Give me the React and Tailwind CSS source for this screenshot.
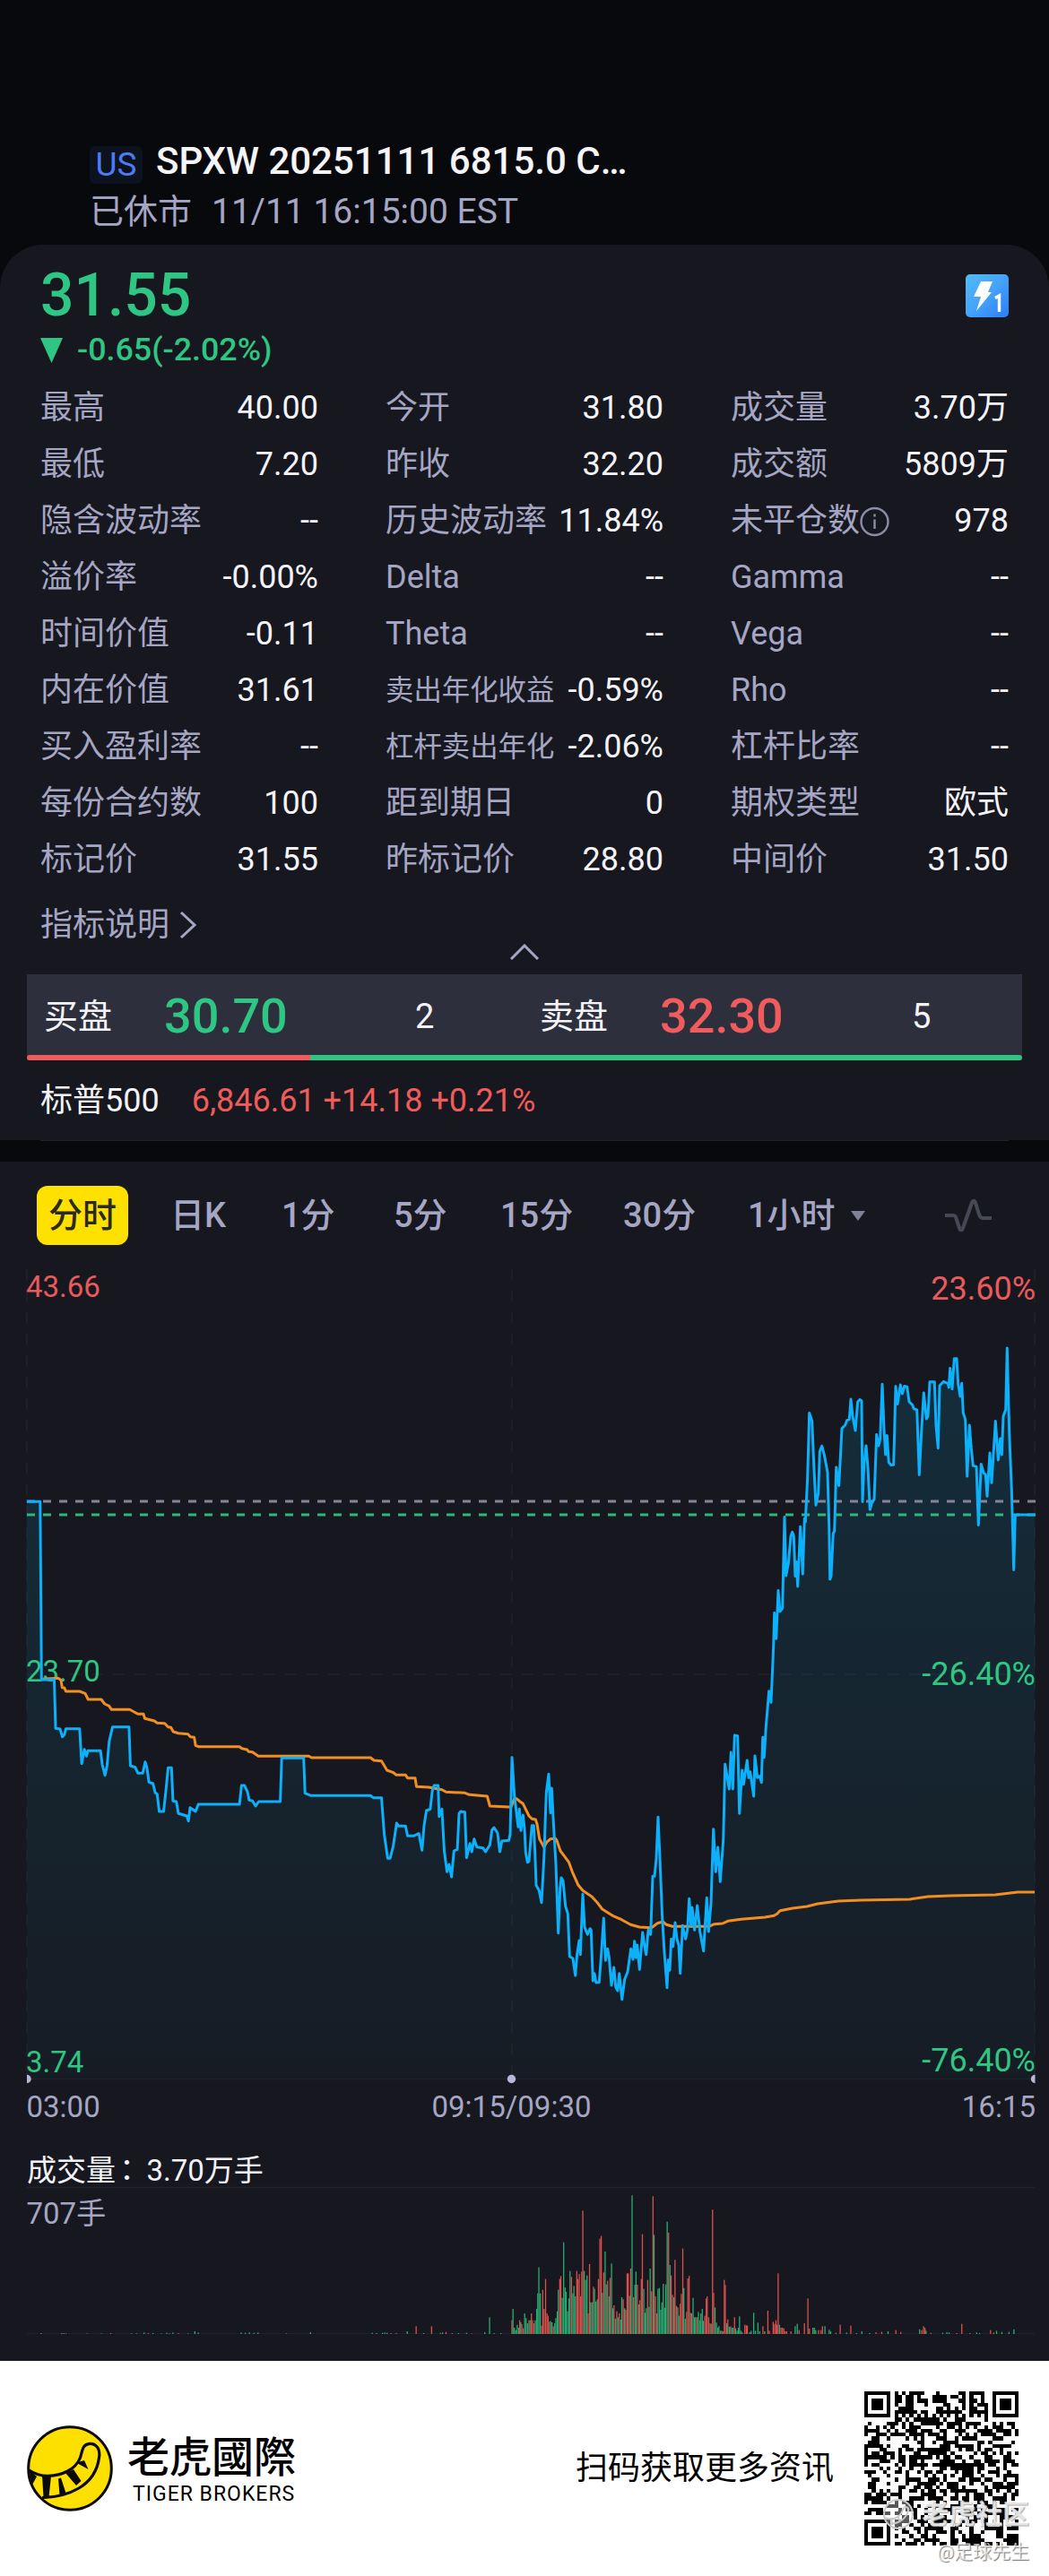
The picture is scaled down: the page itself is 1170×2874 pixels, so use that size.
import React from "react";

const STATS = [
  ["最高", "40.00", "今开", "31.80", "成交量", "3.70万"],
  ["最低", "7.20", "昨收", "32.20", "成交额", "5809万"],
  ["隐含波动率", "--", "历史波动率", "11.84%", "未平仓数", "978"],
  ["溢价率", "-0.00%", "Delta", "--", "Gamma", "--"],
  ["时间价值", "-0.11", "Theta", "--", "Vega", "--"],
  ["内在价值", "31.61", "卖出年化收益", "-0.59%", "Rho", "--"],
  ["买入盈利率", "--", "杠杆卖出年化", "-2.06%", "杠杆比率", "--"],
  ["每份合约数", "100", "距到期日", "0", "期权类型", "欧式"],
  ["标记价", "31.55", "昨标记价", "28.80", "中间价", "31.50"],
];

// Converts "x,y x,y" samples of one session segment to chart pixels.
const project = (text, ox, oy, sx, sy) =>
  text
    .trim()
    .split(/\s+/)
    .map((p) => {
      const [x, y] = p.split(",").map(Number);
      return (ox + x / sx).toFixed(1) + "," + (oy + y / sy).toFixed(1);
    })
    .join(" ");

const PRE = [0, 1640, 2.6133, 3];
const MID = [540, 1840, 3, 3];
const END = [820, 1480, 3, 2.8];

const PRICE = [
  project(
    "78,106 117,106 121,702 158,702 162,865 175,867 182,893 188,885 192,866 232,866 238,983 246,935 252,958 256,940 293,940 298,985 306,1022 312,990 318,910 328,860 376,860 380,990 394,995 402,1015 416,1015 423,977 428,995 434,1045 446,1050 452,1080 458,1085 464,1143 477,1143 483,1080 490,997 500,997 504,1108 514,1110 520,1150 545,1158 549,1175 554,1130 570,1143 578,1119 698,1119 704,1056 713,1056 722,1080 726,1105 736,1108 745,1125 754,1110 817,1110 821,964 885,964 889,1082 907,1090 1080,1090 1088,1097 1112,1097 1120,1220 1130,1300 1137,1300 1146,1260 1156,1182 1162,1192 1182,1192 1188,1225 1205,1225 1221,1217 1230,1273 1236,1190 1243,1140 1254,1135 1260,1075 1265,1056 1277,1056 1280,1160 1288,1135 1295,1275 1303,1345 1309,1320 1316,1362 1323,1275 1333,1270 1338,1150 1343,1143 1355,1145 1360,1298 1370,1250 1375,1278 1382,1235 1390,1262 1408,1265 1415,1278 1428,1255 1434,1205 1440,1197 1450,1215 1457,1278 1463,1242 1483,1240 1487,1220",
    ...PRE
  ),
  project(
    "93,362 101,490 114,595 118,535 123,607 130,555 135,600 139,680 145,713 150,710 154,660 160,590 166,590 170,680 174,790 184,808 192,848 200,700 208,480 216,418 222,548 226,465 232,580 240,720 248,950 254,800 258,765 264,775 272,860 280,885 286,1028 297,1035 305,1092 311,1020 318,975 322,1022 330,820 336,930 346,955 354,935 358,940 364,1110 369,1085 374,1115 385,1115 392,1020 400,900 406,1042 413,1003 418,1030 426,1125 434,1065 440,1130 447,1143 452,1085 461,1172 470,1105 480,1080 491,1003 498,1038 503,977 508,1032 512,990 520,1072 530,948 536,990 542,1022 549,940 557,955 564,760 570,760 576,700 582,562 588,700 596,900 603,1015 612,1133 616,1040 621,1075 626,970 632,995 639,915 645,970 651,990 656,1085 664,925 674,970 680,940 686,835 692,925 696,865 704,940 713,858 722,945 734,1010 745,832 751,945 759,850 767,602 775,745 782,663 790,778 800,640 806,385 820,468 826,345 832,468 838,288 848,290 854,550 863,405 868,452 880,372 885,430 890,410 902,492 906,357 914,430 922,425 928,446 932,295 937,362 943,260 953,140 960,178",
    ...MID
  ),
  project(
    "128,1000 131,895 137,975 144,825 150,890 158,880 165,595 170,778 178,740 186,655 191,642 196,655 201,780 205,735 209,812 218,625 226,773 232,600 235,610 242,470 248,270 257,295 263,430 270,558 278,520 283,390 290,373 298,400 309,455 314,620 317,790 321,780 328,645 332,640 338,440 347,497 357,318 368,308 374,293 382,290 387,227 393,280 402,325 410,235 417,228 423,232 426,547 431,430 438,372 444,440 451,572 458,548 465,540 473,337 480,372 485,350 492,180 498,320 503,400 508,340 514,425 522,433 530,432 537,187 543,242 553,182 559,210 566,186 575,188 582,235 593,245 598,257 608,260 616,463 623,330 631,207 640,288 645,280 651,173 667,173 672,310 679,380 684,185 697,172 712,178 715,190 719,130 726,195 733,100 741,100 746,180 753,218 758,177 763,270 770,290 776,468 784,308 790,380 796,435 807,437 814,620 823,430 832,458 838,462 843,530 852,395 858,488 871,295 880,417 887,350 892,400 897,280 905,260 910,67 917,330 925,510 932,760 937,590 945,588 1003,588",
    ...END
  ),
].join(" ");

const AVERAGE = [
  project(
    "122,700 170,697 178,704 181,728 188,730 192,741 232,741 248,748 257,768 295,768 305,783 318,790 325,802 378,802 402,817 418,817 422,832 450,840 458,847 480,848 490,860 498,862 505,876 520,881 548,884 555,893 566,895 570,922 578,926 698,926 705,932 720,936 725,943 736,944 753,958 900,958 908,963 1080,963 1090,972 1112,974 1120,990 1128,1005 1145,1012 1155,1021 1182,1021 1188,1031 1210,1031 1214,1060 1250,1062 1288,1070 1300,1078 1355,1081 1368,1087 1420,1092 1428,1125 1483,1128",
    ...PRE
  ),
  project(
    "90,528 101,500 108,500 120,510 130,517 150,558 160,568 172,570 177,585 185,635 200,662 210,645 222,635 238,633 243,640 255,675 270,695 283,712 295,745 315,790 330,808 360,828 380,850 395,870 430,892 460,905 490,922 520,930 560,932 580,917 598,912 610,922 630,928 752,928 770,920 798,918 815,910 860,904 940,897 970,892 980,886 990,875",
    ...MID
  ),
  "884,2129 900,2127 912,2124 935,2121 960,2120 1015,2119 1035,2116 1060,2115 1110,2114 1135,2111 1154,2111",
].join(" ");

const bars = (text, ox, sx) =>
  text
    .trim()
    .split(/\s+/)
    .map((p) => {
      const [x, rest] = p.split(",");
      return { x: ox + Number(x) / sx, h: (1031 - parseInt(rest, 10)) / 3, up: rest.endsWith("r") };
    });

const VOLUME = [
  ...bars(
    "120,1028g 180,1028g 186,1028r 192,1029g 254,1029r 296,1029g 323,1028r 383,1029g 398,1029g 420,1026g 432,1028r 446,1028g 470,1029g 486,1027g 494,1029g 504,1026g 520,1028r 548,1029g 568,1022g 578,1026g 703,1026g 715,1027g 727,1026g 740,1027g 752,1026g 835,1029r 905,1025g 1085,1027g 1098,1028g 1115,1027g 1122,1026g 1128,1027g 1140,1028r 1155,1028r 1187,1022g 1213,1005r 1235,1028g 1258,1005r 1284,1027g 1290,1026g 1300,1024r 1318,1028r 1336,1028g 1360,1027g 1375,1029r 1413,1025g 1427,975g 1440,1028g 1460,1028g",
    0,
    2.6133
  ),
  ...bars(
    "53,985r 56,947g 60,1010g 64,1018g 68,1000g 72,1010g 75,985r 78,992g 81,998r 85,1012r 89,962g 93,978g 97,995g 101,985r 104,985g 108,962r 111,985r 115,995r 119,985g 123,947g 126,895g 129,808g 133,895g 137,1003r 140,883r 144,947r 148,847r 152,962r 155,970r 159,990r 162,988g 166,992g 170,1005r 174,995g 177,978g 181,955g 184,883g 188,847r 191,837r 195,910g 199,724g 203,875g 206,890g 210,955g 214,912g 217,820g 221,840r 225,895g 228,870g 232,905g 236,820r 239,847r 243,830r 247,905r 250,822r 253,618r 257,820g 261,850g 265,835g 268,962r 272,797r 275,925g 279,925g 283,873r 286,880g 290,922g 294,915g 297,847r 301,712r 305,703r 308,893g 312,825r 316,755g 319,865g 323,853r 327,905g 330,843r 334,795g 338,945g 341,935r 345,980g 349,955r 352,975g 356,962r 360,983g 363,908g 367,915r 371,945g 374,950r 378,828r 381,828r 385,903g 388,812r 392,567g 396,908r 400,866g 403,822g 407,866r 411,932g 414,918r 418,847r 421,697r 425,880g 429,960g 432,945g 436,850r 440,940g 443,812g 447,888r 451,570r 454,699g 458,905r 462,962r 465,880g 469,877g 473,950g 476,925g 480,863g 484,943g 487,865g 491,655g 495,692r 499,800g 502,835r 506,900r 510,908g 513,783r 517,937r 521,942g 524,970g 528,930r 531,897r 535,745r 538,877g 542,980g 546,957r 549,845r 553,837r 557,960g 560,962r 564,910g 568,975g 571,975g 575,975r 579,957g 582,985g 586,962g 590,947g 593,987g 597,970r 601,912r 604,905r 608,975r 612,995r 615,997g 619,615r 622,893r 626,942g 630,993g 634,1010g 637,1005g 641,1020r 645,1020g 648,1022r 652,850r 655,867r 659,995g 662,982r 666,1007g 670,1005r 673,1010g 677,1010g 681,975r 684,1012g 688,1020g 692,1010g 695,972g 699,1020g 703,1025r 710,1000r 714,1002r 717,1003r 724,1025g 728,1020g 735,960g 740,1020g 747,993g 752,1022g 761,1005r 766,1022g 775,953r 779,1020r 790,990r 794,997r 798,985r 801,1000r 804,828r 808,1000g 812,1010r 816,1010r 820,1012r 824,1022r 828,1022r 840,1022r 852,1005g 858,997g 863,1018r 878,995r 888,912r 892,1013r 902,1010g 906,1010g 910,1018g 918,1018r 925,1018r 929,1005r 936,1005g 948,1017g 952,1022g 967,1027r 979,1000r 997,1026g 1009,1003r 1025,1028g 1040,1022g 1062,1028g 1080,1025r 1096,1024r 1114,1022g 1136,1018r 1150,1024r 1203,1015g 1209,1018r 1214,1005r 1218,1010r 1221,1020g 1235,1027r 1268,1027g 1280,1025g 1286,1026g 1308,1028r 1322,997r 1345,1028g 1364,1026g 1372,1028g 1403,1018r 1412,1026r 1420,1020g 1435,1024g 1455,1024g 1469,1015g",
    550,
    2.529
  ),
];

const TOP_ROW = [8, 10, 12, 13, 14, 15, 19, 25, 26, 28, 29, 30, 31];
const inFinder = (x, y) => (x < 8 && y < 8) || (x > 32 && y < 8) || (x < 8 && y > 32);

function isDark(x, y) {
  if (inFinder(x, y)) {
    const fx = x > 20 ? x - 34 : x;
    const fy = y > 20 ? y - 34 : y;
    if (fx < 0 || fy < 0 || fx > 6 || fy > 6) return false;
    return Math.max(Math.abs(fx - 3), Math.abs(fy - 3)) !== 2;
  }
  if (x === 6) return y % 2 === 0;
  if (y === 6) return x % 2 === 0;
  if (Math.abs(x - 34) <= 2 && Math.abs(y - 34) <= 2) {
    return Math.max(Math.abs(x - 34), Math.abs(y - 34)) !== 1;
  }
  if (y === 0) return TOP_ROW.includes(x);
  const v = Math.sin(x * 12.9898 + y * 78.233) * 43758.5453;
  return v - Math.floor(v) > 0.48;
}

function qrPath() {
  let d = "";
  for (let y = 0; y < 41; y++) {
    for (let x = 0; x < 41; x++) {
      if (isDark(x, y)) d += `M${x} ${y}h1v1h-1z`;
    }
  }
  return d;
}
const QR = qrPath();

function Cell({ label, value, info }) {
  const small = label.length === 6;
  return (
    <div className="flex h-[63px] items-center justify-between">
      <div className="flex items-center text-[#a5a6c4]">
        <span className={small ? "text-[31.4px] leading-[63px]" : "leading-[63px]"}>{label}</span>
        {info && (
          <svg className="h-9 w-9" viewBox="0 0 36 36" fill="none" stroke="#8b8ca6" strokeWidth="2.4">
            <circle cx="16.5" cy="18" r="15" />
            <path d="M16.5 15.5v10.5M16.5 9.5v3" />
          </svg>
        )}
      </div>
      <span className="leading-[63px] text-[#f3f3f7]">{value}</span>
    </div>
  );
}

function Header() {
  return (
    <header className="h-[273px] pl-[100px] pt-[155px]">
      <div className="flex h-[50px] items-center">
        <div className="mt-[7px] flex h-[42px] w-[59px] items-center justify-center rounded-md bg-[#0c121e] text-[37px] leading-[42px] text-[#4b7cf3]">
          US
        </div>
        <h1 className="ml-[15px] text-[42px] font-medium leading-[50px] text-[#f5f5f7]">SPXW 20251111 6815.0 C…</h1>
      </div>
      <div className="mt-[6px] flex h-[50px] items-center text-[39px] leading-[50px] text-[#a5a6c4]">
        <span className="w-[136px] text-[38px]">已休市</span>
        <span>11/11 16:15:00 EST</span>
      </div>
    </header>
  );
}

function Quote() {
  return (
    <section className="h-[999px] rounded-t-[48px] bg-[#17181f] pt-[20px]">
      <div className="pl-[45px] pr-[45px]">
        <div className="flex h-[73px] items-center justify-between">
          <span className="text-[66px] font-medium leading-[73px] text-[#2fc683]">31.55</span>
          <svg className="h-12 w-12" viewBox="0 0 48 48">
            <defs>
              <linearGradient id="flash" x1="0" y1="0" x2="1" y2="1">
                <stop offset="0" stopColor="#52bcf6" />
                <stop offset="0.5" stopColor="#45a2fa" />
                <stop offset="1" stopColor="#2b7df6" />
              </linearGradient>
            </defs>
            <rect width="48" height="48" rx="5" fill="url(#flash)" />
            <path d="M17 8h13l-5 12h4L12 41l5-16H9z" fill="#fff" />
            <path d="M33 26.500l4.500-2.500V42" fill="none" stroke="#fff" strokeWidth="3.400" />
          </svg>
        </div>
        <div className="flex h-[49px] items-center text-[35.8px] font-medium leading-[49px] text-[#2fc683]">
          <svg className="mr-4 h-7 w-[25px]" viewBox="0 0 25 28">
            <path d="M0 0h25L12.500 28z" fill="#2fc683" />
          </svg>
          -0.65(-2.02%)
        </div>
        <div className="mt-[9px] grid grid-cols-3 gap-x-[75px] text-[36px]">
          {STATS.flatMap((r) => [
            <Cell key={r[0]} label={r[0]} value={r[1]} />,
            <Cell key={r[2]} label={r[2]} value={r[3]} />,
            <Cell key={r[4]} label={r[4]} value={r[5]} info={r[4] === "未平仓数"} />,
          ])}
        </div>
        <div className="mt-[10px] flex h-[62px] items-center text-[36px] leading-[62px] text-[#a5a6c4]">
          指标说明
          <svg className="ml-[11px] h-8 w-5" viewBox="0 0 20 32" fill="none" stroke="#a5a6c4" strokeWidth="3">
            <path d="M2 2l15 14L2 30" />
          </svg>
        </div>
      </div>
      <div className="-mt-[10px] flex h-[34px] justify-center">
        <svg className="h-[18px] w-8" viewBox="0 0 32 18" fill="none" stroke="#a5a6c4" strokeWidth="3">
          <path d="M1 17L16 2l15 15" />
        </svg>
      </div>
      <div className="mx-[30px] h-24 bg-[#2d2f3d]">
        <div className="flex h-[90px] text-[38px] leading-[94px] text-[#f3f3f7]">
          <div className="flex w-[553px] pl-[19px]">
            <span className="w-[134px]">买盘</span>
            <span className="w-[280px] text-[54px] font-medium text-[#2fc683]">30.70</span>
            <span>2</span>
          </div>
          <div className="flex pl-[19px]">
            <span className="w-[134px]">卖盘</span>
            <span className="w-[281px] text-[54px] font-medium text-[#f05b5b]">32.30</span>
            <span>5</span>
          </div>
        </div>
        <div className="flex h-[6px] overflow-hidden rounded-full">
          <div className="w-[316px] bg-[#f05b5b]" />
          <div className="flex-1 bg-[#2fc683]" />
        </div>
      </div>
      <div className="mx-[45px] flex h-[90px] items-center border-b border-[#1f2028] text-[36px] leading-[90px]">
        <span className="text-[#f3f3f7]">标普500</span>
        <span className="ml-9 text-[#f05b5b]">6,846.61 +14.18 +0.21%</span>
      </div>
    </section>
  );
}

function Tabs() {
  return (
    <nav className="flex h-[120px] items-center pl-[41px] text-[38px] font-medium leading-[66px] text-[#a5a6c4]">
      <div className="flex h-[66px] w-[102px] items-center justify-center rounded-xl bg-[#ffe100] text-[#2b2a1c]">分时</div>
      <span className="ml-[47px] w-[124px]">日K</span>
      <span className="w-[125px]">1分</span>
      <span className="w-[119px]">5分</span>
      <span className="w-[137px]">15分</span>
      <span className="w-[139px]">30分</span>
      <span>1小时</span>
      <svg className="ml-[17px] h-[11px] w-4" viewBox="0 0 16 11">
        <path d="M0 0h16L8 11z" fill="#7f809a" />
      </svg>
      <svg className="ml-[88px] h-10 w-[54px]" viewBox="0 0 54 40" fill="none" stroke="#474855" strokeWidth="4" strokeLinejoin="round">
        <path d="M1 20h9c3 0 3 2 4 5l3 9c1 3 3 3 4 0L31 6c1-3 3-3 4 0l4 13c1 3 2 4 5 4h9" />
      </svg>
    </nav>
  );
}

function Chart() {
  return (
    <svg className="block h-[1218px] w-full" viewBox="0 1416 1170 1218">
      <defs>
        <linearGradient id="area" gradientUnits="userSpaceOnUse" x1="0" y1="1500" x2="0" y2="2320">
          <stop offset="0" stopColor="#06a7dc" stopOpacity="0.15" />
          <stop offset="1" stopColor="#06a7dc" stopOpacity="0.03" />
        </linearGradient>
        <clipPath id="plot">
          <rect x="30" y="1416" width="1124.500" height="930" />
        </clipPath>
      </defs>
      <g stroke="#212229" strokeWidth="1.500" fill="none">
        <path d="M30 1416V2320M571 1416V2320M1154 1416V2320M30 1868H1154" strokeDasharray="13 11" />
        <path d="M30 2319.500H1154M30 2440.500H1154" />
      </g>
      <polygon points={`30,2319 ${PRICE} 1154.300,2319`} fill="url(#area)" />
      <g strokeWidth="3" strokeDasharray="9 9">
        <path d="M30 1675H1155" stroke="#85839a" />
        <path d="M30 1690H1155" stroke="#2fb67c" />
      </g>
      <g fontSize="33" fill="#2fc683">
        <text x="29" y="1447" fill="#e85a5c">43.66</text>
        <text x="29" y="1875.500">23.70</text>
        <text x="29" y="2311.500">3.74</text>
      </g>
      <g fill="none" strokeLinejoin="round">
        <polyline points={AVERAGE} stroke="#f28f22" strokeWidth="3" />
        <polyline points={PRICE} stroke="#0cb0fb" strokeWidth="3" />
      </g>
      <g fontSize="36" fill="#2fc683" textAnchor="end">
        <text x="1155" y="1450" fill="#e85a5c">23.60%</text>
        <text x="1155" y="1880">-26.40%</text>
        <text x="1155" y="2311">-76.40%</text>
      </g>
      <g fill="#b7b8d6" clipPath="url(#plot)">
        <circle cx="30" cy="2319.500" r="4.700" />
        <circle cx="570.500" cy="2319.500" r="4.700" />
        <circle cx="1154.500" cy="2319.500" r="4.700" />
      </g>
      <g fontSize="33" fill="#a5a6c4">
        <text x="29.500" y="2362">03:00</text>
        <text x="570.500" y="2362" textAnchor="middle">09:15/09:30</text>
        <text x="1155" y="2362" textAnchor="end">16:15</text>
        <text x="29.500" y="2480.500">707手</text>
        <g fill="#f3f3f7">
          <text x="30" y="2433">成交量</text>
          <text x="125" y="2433" className="font-['Noto_Sans_CJK_TC']">：</text>
          <text x="163.500" y="2433">3.70万手</text>
        </g>
      </g>
      <path d="M30 2603.500H1154" stroke="#212229" />
      {VOLUME.map((b, i) => (
        <rect key={i} x={b.x - 0.65} y={2604 - b.h} width="1.3" height={b.h} fill={b.up ? "#d9504f" : "#2aad73"} />
      ))}
    </svg>
  );
}

function Footer() {
  return (
    <footer className="relative flex h-[240px] items-center bg-white pl-[30px] text-black">
      <svg className="h-24 w-24" viewBox="0 0 96 96">
        <circle cx="48" cy="48" r="46.300" fill="#fde000" stroke="#0d0b07" strokeWidth="3" />
        <path
          d="M2.500 50C10 55 17 56.500 24 56.300C38 56 54 50 59.500 36C62 28 62 21 70 20.300C78 20 82 27 80.500 36C78 55 68 64 58 70C46 77 32 80.500 17 80.700"
          fill="none"
          stroke="#0d0b07"
          strokeWidth="3.200"
        />
        <path
          d="M2.500 50L11 57 5.500 67zM17 56.500h10L24.500 80h-6zM35 59.500l3-1 5.500 17-7 2zM43 53l9-4 8.500 13-5.500 5zM55 41.500l9-2.500 4.500 10z"
          fill="#0d0b07"
        />
      </svg>
      <div className="ml-4 w-[191px]">
        <div className="h-[52px] whitespace-nowrap font-['Noto_Sans_CJK_TC'] text-[47px] font-medium leading-[52px]">老虎國際</div>
        <div className="ml-[6px] mt-[6px] whitespace-nowrap text-[23px] leading-[26px] tracking-[1px]">TIGER BROKERS</div>
      </div>
      <div className="ml-[309px] w-[322px] text-[36px] leading-[44px]">扫码获取更多资讯</div>
      <svg className="h-[172px] w-[172px]" viewBox="0 0 41 41" shapeRendering="crispEdges">
        <path d={QR} fill="#000" />
      </svg>
      <div className="absolute right-[22px] top-[150px] flex flex-col items-end text-white/70">
        <div className="flex h-[42px] items-center">
          <svg className="mr-2 h-9 w-9" viewBox="0 0 36 36" fill="none" stroke="#c9c9c9" strokeWidth="2">
            <circle cx="18" cy="18" r="16" fill="#fff" fillOpacity="0.35" />
            <path d="M3 22c10 4 17-1 20-9 2-5 7-3 6 1-2 8-9 14-20 15M10 22l1 7M17 20l3 6" />
          </svg>
          <span className="text-[30px] font-bold leading-[42px] [text-shadow:1px_1px_1px_#aaa]">老虎社区</span>
        </div>
        <div className="mt-[6px] text-[21px] leading-[30px] [text-shadow:1px_1px_1px_#777]">@足球先生</div>
      </div>
    </footer>
  );
}

export default function App() {
  return (
    <div className="w-[1170px] bg-[#08090d] font-['Roboto','Noto_Sans_CJK_SC',sans-serif]">
      <Header />
      <Quote />
      <section className="mt-6 bg-[#17181f]">
        <Tabs />
        <Chart />
      </section>
      <Footer />
    </div>
  );
}
